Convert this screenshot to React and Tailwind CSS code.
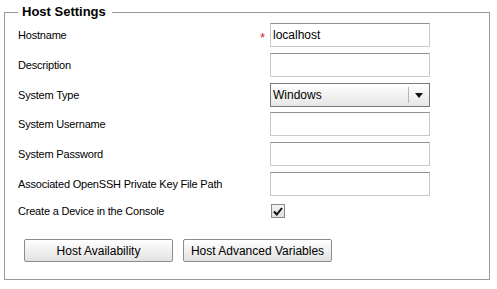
import React from "react";

const font = { fontFamily: '"Liberation Sans", Arial, sans-serif' };

const Field = ({ label, required, children, className = "" }) => (
  <div className={`flex items-center h-[24px] ${className}`}>
    <div className="w-[242px] text-[11px] tracking-[-0.2px] text-black">{label}</div>
    <div className="w-[10px] text-[13px] leading-none text-[#e0202a] pt-[4px]">
      {required ? "*" : ""}
    </div>
    {children}
  </div>
);

const TextBox = ({ value = "" }) => (
  <div className="w-[160px] h-[24px] border border-[#c9c9c9] border-t-[#8f8f8f] bg-white flex items-center px-[2px] text-[12px] text-black">
    {value}
  </div>
);

const App = () => {
  const buttonCls =
    "w-[149px] h-[23px] border border-[#8c8c8c] rounded-[2px] bg-gradient-to-b from-white to-[#e1e1e1] text-[12px] text-black flex items-center justify-center";

  return (
    <div className="w-[497px] h-[289px] bg-white pt-[4px] pl-[4px]" style={font}>
      <fieldset className="w-[486px] border border-[#9a9a9a] pl-[13px] pt-[3px] pb-[17px]">
        <legend className="pl-[4px] pr-[6px] text-[13px] leading-[16px] font-bold text-black">
          Host Settings
        </legend>

        <Field label="Hostname" required>
          <TextBox value="localhost" />
        </Field>
        <Field label="Description" className="mt-[6px]">
          <TextBox />
        </Field>
        <Field label="System Type" className="mt-[6px]">
          <div className="w-[160px] h-[24px] border border-[#7a7a7a] bg-gradient-to-b from-white to-[#e6e6e6] flex items-center text-[12px] text-black">
            <span className="flex-1 pl-[2px]">Windows</span>
            <span className="w-px h-[16px] bg-[#b5b5b5]" />
            <span className="w-[20px] flex items-center justify-center">
              <svg width="8" height="5" viewBox="0 0 8 5">
                <path d="M0 0 H8 L4 5 Z" fill="#111" />
              </svg>
            </span>
          </div>
        </Field>
        <Field label="System Username" className="mt-[5px]">
          <TextBox />
        </Field>
        <Field label="System Password" className="mt-[6px]">
          <TextBox />
        </Field>
        <Field label="Associated OpenSSH Private Key File Path" className="mt-[6px]">
          <TextBox />
        </Field>

        <div className="flex items-center h-[16px] mt-[7px]">
          <div className="w-[252px] text-[11px] tracking-[-0.2px] text-black">
            Create a Device in the Console
          </div>
          <div className="ml-[1px] w-[14px] h-[14px] border border-[#8a8a8a] bg-gradient-to-b from-[#f4f4f4] to-[#dedede] flex items-center justify-center">
            <svg width="10" height="9" viewBox="0 0 10 9">
              <path d="M1 4.5 L3.8 7.5 L9 1" fill="none" stroke="#111" strokeWidth="2" />
            </svg>
          </div>
        </div>

        <div className="flex gap-[10px] mt-[20px] ml-[6px]">
          <button className={buttonCls}>Host Availability</button>
          <button className={buttonCls}>Host Advanced Variables</button>
        </div>
      </fieldset>
    </div>
  );
};

export default App;
